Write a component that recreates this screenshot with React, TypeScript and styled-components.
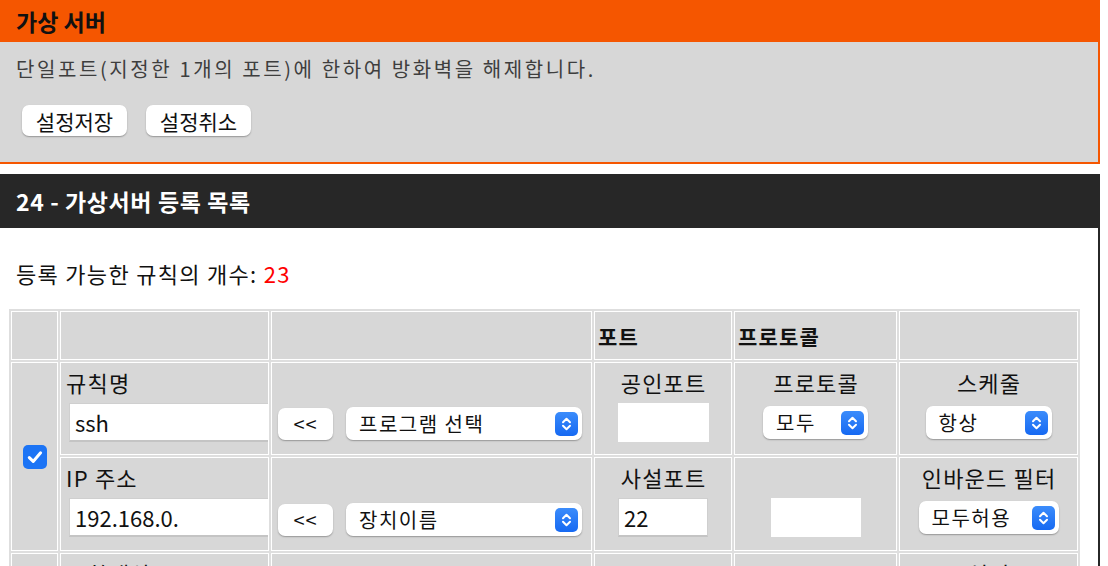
import React from "react";
import styled, { createGlobalStyle } from "styled-components";

const GlobalStyle = createGlobalStyle`
  html, body {
    margin: 0;
    padding: 0;
    background: #ffffff;
    font-family: "Noto Sans CJK KR", "Noto Sans", sans-serif;
    color: #111;
  }
  * { box-sizing: border-box; }
`;

const ORANGE = "#f55600";
const DARK = "#272727";
const CELL = "#d7d7d7";

const Page = styled.div`
  width: 1108px;
  height: 566px;
  overflow: hidden;
`;

const TopPanel = styled.section`
  width: 1100px;
  border-right: 2px solid ${ORANGE};
  border-bottom: 2px solid ${ORANGE};
`;

const OrangeHeader = styled.h2`
  margin: 0;
  height: 42px;
  background: ${ORANGE};
  padding-left: 16px;
  display: flex;
  align-items: center;
  font-size: 23px;
  font-weight: 700;
  color: #111;
`;

const GrayBody = styled.div`
  height: 120px;
  background: ${CELL};
  padding: 13px 0 0 16px;
  display: flex;
  flex-direction: column;
  gap: 23px;
`;

const Description = styled.p`
  margin: 0;
  font-size: 20px;
  line-height: 27px;
  letter-spacing: 2.6px;
  color: #3e3e3e;
`;

const ButtonRow = styled.div`
  display: flex;
  gap: 19px;
  padding-left: 6px;
`;

const PillButton = styled.button`
  height: 31px;
  width: 105px;
  border: none;
  border-radius: 7px;
  background: #fff;
  box-shadow: 0 1px 1.5px rgba(0, 0, 0, 0.3);
  font-family: inherit;
  font-size: 21px;
  color: #111;
  padding: 0;
  display: flex;
  align-items: center;
  justify-content: center;
`;

const ListPanel = styled.section`
  margin-top: 10px;
  width: 1100px;
  border-right: 2px solid ${DARK};
`;

const DarkHeader = styled.h2`
  margin: 0;
  height: 54px;
  background: ${DARK};
  color: #fff;
  padding-left: 16px;
  display: flex;
  align-items: center;
  font-size: 23px;
  font-weight: 700;
  letter-spacing: 0.6px;
`;

const ListBody = styled.div`
  padding: 31px 0 0 9px;
`;

const CountLine = styled.div`
  padding-left: 7px;
  font-size: 22px;
  line-height: 28px;
  letter-spacing: 1.3px;
  color: #111;
  margin-bottom: 22px;
`;

const Red = styled.span`
  color: #f00;
`;

const Grid = styled.div`
  display: grid;
  grid-template-columns: 47px 209px 321px 138px 163px 179px;
  grid-template-rows: 49px 93px 94px 60px;
  gap: 2px;
  padding: 2px;
  background: #dedede;
  width: max-content;
`;

const Cell = styled.div<{ $center?: boolean }>`
  background: ${CELL};
  border: 1px solid #fff;
  overflow: hidden;
  padding: 7px 5px 0;
  display: flex;
  flex-direction: column;
  align-items: ${(p) => (p.$center ? "center" : "stretch")};
`;

const HeadCell = styled.div`
  background: ${CELL};
  border: 1px solid #fff;
  padding: 0 3px;
  display: flex;
  align-items: center;
  font-size: 21px;
  font-weight: 700;
  letter-spacing: 1.2px;
`;

const CheckCell = styled.div`
  background: ${CELL};
  border: 1px solid #fff;
  grid-row: span 2;
  display: flex;
  align-items: center;
  justify-content: center;
  padding-left: 1px;
`;

const Label = styled.div<{ $center?: boolean }>`
  font-size: 22px;
  line-height: 24px;
  height: 24px;
  letter-spacing: 1.2px;
  white-space: nowrap;
  color: #111;
  margin-right: ${(p) => (p.$center ? "-1.2px" : "0")};
`;

const ControlRow = styled.div<{ $gap?: number; $pad?: number }>`
  margin-top: 9px;
  height: 39px;
  display: flex;
  align-items: center;
  gap: ${(p) => p.$gap ?? 0}px;
  padding-left: ${(p) => p.$pad ?? 0}px;
`;

const ActionCell = styled.div`
  background: ${CELL};
  border: 1px solid #fff;
  padding: 0 0 11px 6px;
  display: flex;
  flex-direction: column;
  justify-content: flex-end;
`;

const TextInput = styled.input<{ $w: number; $bare?: boolean }>`
  width: ${(p) => p.$w}px;
  height: 39px;
  background: #fff;
  border: ${(p) => (p.$bare ? "none" : "1px solid #cfcfcf")};
  border-bottom: ${(p) => (p.$bare ? "none" : "2px solid #c4c4c4")};
  font-family: inherit;
  font-size: 22px;
  color: #111;
  padding: 0 0 0 5px;
  margin: 0;
  flex-shrink: 0;
  outline: none;
`;

const SmallButton = styled.button`
  width: 55px;
  height: 32px;
  border: none;
  border-radius: 7px;
  background: #fff;
  box-shadow: 0 1px 1.5px rgba(0, 0, 0, 0.3);
  font-family: inherit;
  font-size: 20px;
  letter-spacing: 1px;
  color: #111;
  padding: 0;
  flex-shrink: 0;
`;

const SelectBox = styled.div<{ $w: number }>`
  width: ${(p) => p.$w}px;
  height: 33px;
  border-radius: 7px;
  background: #fff;
  box-shadow: 0 1px 1.5px rgba(0, 0, 0, 0.3);
  display: flex;
  align-items: center;
  justify-content: space-between;
  padding: 0 4px 0 13px;
  font-size: 20px;
  letter-spacing: 1.5px;
  color: #111;
  flex-shrink: 0;
  white-space: nowrap;
`;

const Chevron = () => (
  <svg width="23" height="24" viewBox="0 0 23 24">
    <defs>
      <linearGradient id="cg" x1="0" y1="0" x2="0" y2="1">
        <stop offset="0" stopColor="#3b8cfb" />
        <stop offset="1" stopColor="#1669f2" />
      </linearGradient>
    </defs>
    <rect x="0" y="0" width="23" height="24" rx="5" fill="url(#cg)" />
    <path d="M8 10.2 L11.5 6.8 L15 10.2" fill="none" stroke="#fff" strokeWidth="2" strokeLinecap="round" strokeLinejoin="round" />
    <path d="M8 13.8 L11.5 17.2 L15 13.8" fill="none" stroke="#fff" strokeWidth="2" strokeLinecap="round" strokeLinejoin="round" />
  </svg>
);

const Select = ({ w, children }: { w: number; children: React.ReactNode }) => (
  <SelectBox $w={w}>
    <span>{children}</span>
    <Chevron />
  </SelectBox>
);

const CheckBox = () => (
  <svg width="24" height="24" viewBox="0 0 24 24">
    <rect x="0" y="0" width="24" height="24" rx="5" fill="#1c74f5" />
    <path d="M6.3 12.6 L10.2 16.4 L17.6 7.8" fill="none" stroke="#fff" strokeWidth="3" strokeLinecap="round" strokeLinejoin="round" />
  </svg>
);

export default function App() {
  return (
    <Page>
      <GlobalStyle />
      <TopPanel>
        <OrangeHeader>가상 서버</OrangeHeader>
        <GrayBody>
          <Description>단일포트(지정한 1개의 포트)에 한하여 방화벽을 해제합니다.</Description>
          <ButtonRow>
            <PillButton>설정저장</PillButton>
            <PillButton>설정취소</PillButton>
          </ButtonRow>
        </GrayBody>
      </TopPanel>

      <ListPanel>
        <DarkHeader>24 - 가상서버 등록 목록</DarkHeader>
        <ListBody>
          <CountLine>
            등록 가능한 규칙의 개수: <Red>23</Red>
          </CountLine>
          <Grid>
            <HeadCell />
            <HeadCell />
            <HeadCell />
            <HeadCell>포트</HeadCell>
            <HeadCell>프로토콜</HeadCell>
            <HeadCell />

            <CheckCell>
              <CheckBox />
            </CheckCell>
            <Cell>
              <Label>규칙명</Label>
              <ControlRow $pad={3}>
                <TextInput $w={220} defaultValue="ssh" />
              </ControlRow>
            </Cell>
            <ActionCell>
              <ControlRow $gap={13}>
                <SmallButton>&lt;&lt;</SmallButton>
                <Select w={236}>프로그램 선택</Select>
              </ControlRow>
            </ActionCell>
            <Cell $center>
              <Label $center>공인포트</Label>
              <ControlRow>
                <TextInput $w={91} $bare defaultValue="" />
              </ControlRow>
            </Cell>
            <Cell $center>
              <Label $center>프로토콜</Label>
              <ControlRow>
                <Select w={105}>모두</Select>
              </ControlRow>
            </Cell>
            <Cell $center>
              <Label $center>스케줄</Label>
              <ControlRow>
                <Select w={126}>항상</Select>
              </ControlRow>
            </Cell>

            <Cell>
              <Label>IP 주소</Label>
              <ControlRow $pad={3}>
                <TextInput $w={220} defaultValue="192.168.0." />
              </ControlRow>
            </Cell>
            <ActionCell>
              <ControlRow $gap={13}>
                <SmallButton>&lt;&lt;</SmallButton>
                <Select w={236}>장치이름</Select>
              </ControlRow>
            </ActionCell>
            <Cell $center>
              <Label $center>사설포트</Label>
              <ControlRow>
                <TextInput $w={90} defaultValue="22" />
              </ControlRow>
            </Cell>
            <Cell $center>
              <Label />
              <ControlRow>
                <TextInput $w={90} $bare defaultValue="" />
              </ControlRow>
            </Cell>
            <Cell $center>
              <Label $center>인바운드 필터</Label>
              <ControlRow>
                <Select w={140}>모두허용</Select>
              </ControlRow>
            </Cell>

            <Cell />
            <Cell>
              <Label>포함대상</Label>
            </Cell>
            <Cell />
            <Cell $center>
              <Label $center>포트</Label>
            </Cell>
            <Cell $center />
            <Cell $center>
              <Label $center>설명</Label>
            </Cell>
          </Grid>
        </ListBody>
      </ListPanel>
    </Page>
  );
}
